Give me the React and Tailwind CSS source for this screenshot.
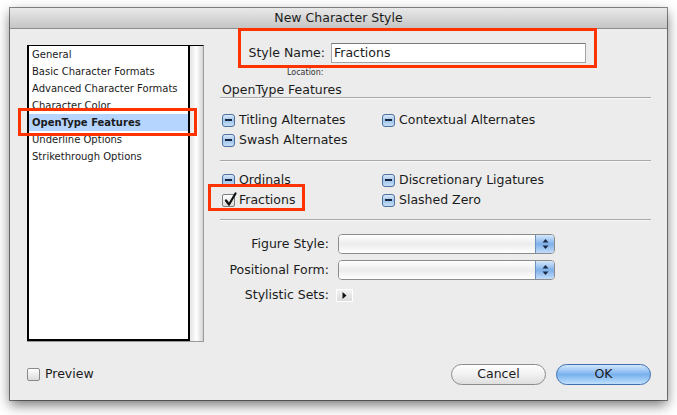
import React from 'react';

const listItems = [
  'General',
  'Basic Character Formats',
  'Advanced Character Formats',
  'Character Color',
  'OpenType Features',
  'Underline Options',
  'Strikethrough Options',
];

function MixedBox() {
  return (
    <div className="w-[13px] h-[13px] shrink-0 rounded-[3px] border border-[#4f6f9c] bg-gradient-to-b from-[#dbeafb] via-[#9fc3ea] to-[#c6def6] flex items-center justify-center">
      <div className="w-[7px] h-[2px] bg-[#15243f]" />
    </div>
  );
}

function CheckedBox() {
  return (
    <div className="relative w-[13px] h-[13px] shrink-0 rounded-[2px] border border-[#7d7d7d] bg-gradient-to-b from-white to-[#dadada]">
      <svg className="absolute -top-[3px] left-[1px]" width="13" height="15" viewBox="0 0 13 15">
        <path d="M2 8.5 L5 12.5 L11.5 1.5" fill="none" stroke="#111" strokeWidth="2.2" strokeLinecap="round" strokeLinejoin="round" />
      </svg>
    </div>
  );
}

function Option({ label, checked }) {
  return (
    <div className="flex items-center h-[20px]">
      {checked ? <CheckedBox /> : <MixedBox />}
      <span className="ml-[4px] whitespace-nowrap">{label}</span>
    </div>
  );
}

function Popup({ label }) {
  return (
    <div className="flex items-center h-[20px]">
      <span className="w-[109px] text-right whitespace-nowrap">{label}</span>
      <div className="ml-[9px] w-[217px] h-[20px] flex rounded-[4px] border border-[#8c8c8c] overflow-hidden">
        <div className="flex-1 bg-gradient-to-b from-white via-[#ececec] to-white" />
        <div className="w-[19px] border-l border-[#6d8fbf] bg-gradient-to-b from-[#d6e8fb] via-[#7eb0ea] to-[#c2dcf8] flex items-center justify-center">
          <svg width="7" height="12" viewBox="0 0 7 12">
            <path d="M3.5 1 L6.5 4.5 L0.5 4.5 Z" fill="#1a2a44" />
            <path d="M3.5 11 L6.5 7.5 L0.5 7.5 Z" fill="#1a2a44" />
          </svg>
        </div>
      </div>
    </div>
  );
}

function Separator() {
  return (
    <div>
      <div className="h-px bg-[#a9a9a9]" />
      <div className="h-px bg-[#f8f8f8]" />
    </div>
  );
}

export default function App() {
  return (
    <div className="w-[677px] h-[415px] bg-white pl-[10px] pt-[8px] font-['DejaVu_Sans',sans-serif] text-[#1b1b1b]">
      <div className="relative w-[657px] h-[392px] bg-[#ececec] shadow-[0_0_0_1px_rgba(0,0,0,0.45),0_5px_12px_rgba(0,0,0,0.55)] flex flex-col">
        {/* title bar */}
        <div className="h-[21px] shrink-0 bg-gradient-to-b from-[#e9e9e9] to-[#c5c5c5] border-b border-[#8d8d8d] flex items-center justify-center text-[12.5px] leading-none">
          New Character Style
        </div>

        <div className="flex pl-[17px] pr-[16px]">
          {/* category list */}
          <div className="mt-[16px] w-[177px] h-[297px] flex border-t border-black border-r border-r-[#9a9a9a] border-b border-b-[#9a9a9a]">
            <div className="w-[163px] h-full bg-white border-l-2 border-r-2 border-b-2 border-black text-[10px]">
              {listItems.map((item) => (
                <div
                  key={item}
                  className={`h-[17px] leading-[17px] pl-[3px] whitespace-nowrap ${item === 'OpenType Features' ? 'bg-[#b5d5ff] font-bold' : ''}`}
                >
                  {item}
                </div>
              ))}
            </div>
            <div className="flex-1 bg-gradient-to-r from-[#e4e4e4] via-white to-[#d4d4d4]" />
          </div>

          {/* right panel */}
          <div className="ml-[16px] flex-1 mt-[14px] text-[12.5px]">
            <div className="flex items-center h-[20px]">
              <span className="w-[105px] text-right whitespace-nowrap">Style Name:</span>
              <div className="ml-[6px] w-[255px] h-[20px] bg-white border border-[#a4a4a4] border-t-[#7a7a7a] flex items-center pl-[2px] text-[12.5px]">
                Fractions
              </div>
            </div>
            <div className="mt-[5px] h-[10px] leading-[10px] pl-[67px] text-[8px] text-[#333]">Location:</div>
            <div className="mt-[5px] h-[14px] leading-[14px] pl-[2px]">OpenType Features</div>
            <Separator />

            <div className="mt-[11px] pl-[2px] grid grid-cols-[160px_1fr]">
              <Option label="Titling Alternates" />
              <Option label="Contextual Alternates" />
              <Option label="Swash Alternates" />
              <div />
            </div>
            <div className="mt-[10px]">
              <Separator />
            </div>
            <div className="mt-[8px] pl-[2px] grid grid-cols-[160px_1fr]">
              <Option label="Ordinals" />
              <Option label="Discretionary Ligatures" />
              <Option label="Fractions" checked />
              <Option label="Slashed Zero" />
            </div>
            <div className="mt-[9px]">
              <Separator />
            </div>

            <div className="mt-[13px]">
              <Popup label="Figure Style:" />
            </div>
            <div className="mt-[6px]">
              <Popup label="Positional Form:" />
            </div>
            <div className="mt-[8px] flex items-center h-[14px]">
              <span className="w-[109px] text-right whitespace-nowrap">Stylistic Sets:</span>
              <div className="ml-[7px] w-[17px] h-[13px] border border-white bg-gradient-to-b from-[#f2f2f2] to-[#dcdcdc] flex items-center justify-center">
                <svg width="5" height="7" viewBox="0 0 5 7">
                  <path d="M0.5 0 L4.5 3.5 L0.5 7 Z" fill="#111" />
                </svg>
              </div>
            </div>
          </div>
        </div>

        {/* bottom row */}
        <div className="mt-auto mb-[15px] pl-[17px] pr-[16px] flex items-center h-[21px] text-[12.5px]">
          <div className="w-[13px] h-[13px] rounded-[2px] border border-[#8a8a8a] bg-gradient-to-b from-white to-[#dcdcdc]" />
          <span className="ml-[5px]">Preview</span>
          <div className="ml-auto flex gap-[10px]">
            <button className="w-[95px] h-[21px] rounded-full border border-[#8c8c8c] bg-gradient-to-b from-white via-[#f1f1f1] to-[#dedede] text-[12.5px] leading-none">
              Cancel
            </button>
            <button className="w-[95px] h-[21px] rounded-full border border-[#3f6fb0] bg-gradient-to-b from-[#d3e7fb] via-[#79b1ef] to-[#bfe0fb] text-[12.5px] leading-none">
              OK
            </button>
          </div>
        </div>

        {/* red annotation boxes */}
        <div className="absolute left-[228px] top-[20px] w-[359px] h-[40px] border-[3px] border-[#ff3300] pointer-events-none" />
        <div className="absolute left-[8px] top-[100px] w-[179px] h-[28px] border-[3px] border-[#ff3300] pointer-events-none" />
        <div className="absolute left-[198px] top-[176px] w-[97px] h-[27px] border-[3px] border-[#ff3300] pointer-events-none" />
      </div>
    </div>
  );
}
